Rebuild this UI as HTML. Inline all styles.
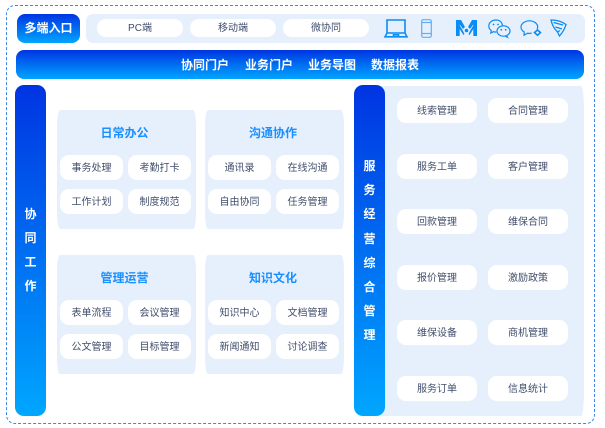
<!DOCTYPE html>
<html lang="zh"><head><meta charset="utf-8"><style>
html,body{margin:0;padding:0;background:#fff}
body{position:relative;width:605px;height:428px;overflow:hidden;font-family:"Liberation Sans","Noto Sans CJK SC",sans-serif}
div{position:absolute;box-sizing:border-box}
.frame{left:6px;top:5px;width:589px;height:419px;border:1px dashed #3b86ea;border-radius:9px}
.g{background:linear-gradient(180deg,#0034e2,#00a6ff);color:#fff;font-weight:700}
.l{background:#e6f0fc}
.p{background:#fff;border-radius:9px;color:#414e6c;font-size:10px;line-height:27px;height:25px;text-align:center}
.t{background:#fff;border-radius:9px;color:#414e6c;font-size:10px;line-height:19px;height:18px;width:86px;top:19px;text-align:center}
.panel{width:139px;height:119px;background:#e6f0fc;border-radius:3px/16px}
.h{color:#1a8fff;font-size:12px;font-weight:700;text-align:center;line-height:18px;height:18px}
.a{width:63px}.b{width:80px}
.c{width:48px;font-size:12px;line-height:18px;text-align:center;color:#fff;font-weight:700;top:6px}
.s{width:31px;height:18px;line-height:18px;text-align:center;font-size:12px;color:#fff;font-weight:700}
svg{position:absolute;overflow:visible}
</style></head><body>
<div class="frame"></div>
<div class="g" style="left:17px;top:14px;width:63px;height:29px;border-radius:8px;font-size:12px;line-height:29px;text-align:center">多端入口</div>
<div class="l" style="left:86px;top:14px;width:499px;height:29px;border-radius:7px"></div>
<div class="t" style="left:97px">PC端</div><div class="t" style="left:190px">移动端</div><div class="t" style="left:283px">微协同</div>

<svg style="left:384px;top:19px" width="24" height="19" viewBox="0 0 24 19" fill="none" stroke="#0a8cf5" stroke-width="1.600"><path d="M3 1h18v13H3zM1 17.800h22l-2-3.800H3zM9.500 17.800v-2h5v2"/></svg>
<svg style="left:421px;top:19px" width="11" height="19" viewBox="0 0 11 19" fill="none" stroke="#62aef5" stroke-width="1.200"><rect x=".7" y=".7" width="9.600" height="17.600" rx="1.500"/><path d="M.7 3.500h9.600M.7 14.500h9.600"/></svg>
<svg style="left:456px;top:20px" width="21" height="17" viewBox="0 0 21 17" fill="#0a8cf5"><path d="M0 0h5l4 7-2 2L3.800 4.500v1L7 11l1.500 3-1 1-2-3-1.800-3V16H0z"/><path d="M21 0h-5l-4 7 2 2 3.200-4.500v1L14 11l-1.500 3 1 1 2-3 1.800-3V16H21z"/><circle cx="10.500" cy="10.500" r="1.800"/></svg>
<svg style="left:488px;top:19px" width="23" height="19" viewBox="0 0 23 19" fill="none" stroke="#0a8cf5" stroke-width="1.200"><path d="M14.500 6.500C14 3 11.500 1 8 1 4 1 .8 3.500.8 7c0 2 1 3.500 2.500 4.600L2.800 14l2.700-1.300c1 .3 1.700.4 2.800.4"/><ellipse cx="15.500" cy="12" rx="6.500" ry="5.200" fill="#e6f0fc"/><path d="M18.500 16.500l1 1.800-2.500-1.200"/><circle cx="5.500" cy="5.500" r=".9" fill="#0a8cf5" stroke="none"/><circle cx="10" cy="5.500" r=".9" fill="#0a8cf5" stroke="none"/><circle cx="13.300" cy="10.800" r=".9" fill="#0a8cf5" stroke="none"/><circle cx="17.700" cy="10.800" r=".9" fill="#0a8cf5" stroke="none"/></svg>
<svg style="left:520px;top:20px" width="22" height="17" viewBox="0 0 22 17" fill="none" stroke="#0a8cf5" stroke-width="1.200"><path d="M17 9.500c.5-.8.700-1.600.7-2.500C17.700 3.500 14 .8 9.500.8S1 3.500 1 7c0 2 1.300 3.800 3.200 5L4 15.200l3.500-2c.7.100 1.300.2 2 .2.800 0 1.500-.1 2.200-.3"/><path d="M17.500 10l3 2.500-3 2.800-3-2.800z" stroke-width="1.600"/></svg>
<svg style="left:550px;top:19px" width="17" height="18" viewBox="0 0 17 18" fill="none" stroke="#0a8cf5" stroke-width="1.300"><path d="M1 1c5 0 11 1.500 15 4.500-1 4-3.500 8-6.500 11.500L7.500 13C4.500 10 2 6 1 1z"/><path d="M3.500 3.500l9.500 2.500M5.500 8l6.500 2M7.500 13l2.500-1.500"/></svg>

<div class="g" style="left:16px;top:50px;width:568px;height:29px;border-radius:8px"><div class="c" style="left:165px">协同门户</div><div class="c" style="left:229px">业务门户</div><div class="c" style="left:292px">业务导图</div><div class="c" style="left:355px">数据报表</div></div>

<div class="g" style="left:15px;top:85px;width:31px;height:331px;border-radius:9px"></div>
<div class="s" style="left:15px;top:205px">协</div><div class="s" style="left:15px;top:229px">同</div><div class="s" style="left:15px;top:253px">工</div><div class="s" style="left:15px;top:277px">作</div>

<div class="panel" style="left:57px;top:110px"></div><div class="panel" style="left:205px;top:110px"></div><div class="panel" style="left:57px;top:255px"></div><div class="panel" style="left:205px;top:255px"></div>
<div class="h" style="left:57px;top:124px;width:135px">日常办公</div><div class="h" style="left:205px;top:124px;width:136px">沟通协作</div><div class="h" style="left:57px;top:269px;width:135px">管理运营</div><div class="h" style="left:205px;top:269px;width:136px">知识文化</div>

<div class="p a" style="left:60px;top:155px">事务处理</div><div class="p a" style="left:128px;top:155px">考勤打卡</div><div class="p a" style="left:60px;top:189px">工作计划</div><div class="p a" style="left:128px;top:189px">制度规范</div>
<div class="p a" style="left:208px;top:155px">通讯录</div><div class="p a" style="left:276px;top:155px">在线沟通</div><div class="p a" style="left:208px;top:189px">自由协同</div><div class="p a" style="left:276px;top:189px">任务管理</div>
<div class="p a" style="left:60px;top:300px">表单流程</div><div class="p a" style="left:128px;top:300px">会议管理</div><div class="p a" style="left:60px;top:334px">公文管理</div><div class="p a" style="left:128px;top:334px">目标管理</div>
<div class="p a" style="left:208px;top:300px">知识中心</div><div class="p a" style="left:276px;top:300px">文档管理</div><div class="p a" style="left:208px;top:334px">新闻通知</div><div class="p a" style="left:276px;top:334px">讨论调查</div>

<div class="l" style="left:375px;top:86px;width:209px;height:330px;border-radius:3px/24px"></div>
<div class="g" style="left:354px;top:85px;width:31px;height:331px;border-radius:9px"></div>
<div class="s" style="left:354px;top:157px">服</div><div class="s" style="left:354px;top:181px">务</div><div class="s" style="left:354px;top:205px">经</div><div class="s" style="left:354px;top:230px">营</div><div class="s" style="left:354px;top:254px">综</div><div class="s" style="left:354px;top:278px">合</div><div class="s" style="left:354px;top:302px">管</div><div class="s" style="left:354px;top:326px">理</div>

<div class="p b" style="left:397px;top:98px">线索管理</div><div class="p b" style="left:488px;top:98px">合同管理</div>
<div class="p b" style="left:397px;top:154px">服务工单</div><div class="p b" style="left:488px;top:154px">客户管理</div>
<div class="p b" style="left:397px;top:209px">回款管理</div><div class="p b" style="left:488px;top:209px">维保合同</div>
<div class="p b" style="left:397px;top:265px">报价管理</div><div class="p b" style="left:488px;top:265px">激励政策</div>
<div class="p b" style="left:397px;top:320px">维保设备</div><div class="p b" style="left:488px;top:320px">商机管理</div>
<div class="p b" style="left:397px;top:376px">服务订单</div><div class="p b" style="left:488px;top:376px">信息统计</div>
</body></html>
